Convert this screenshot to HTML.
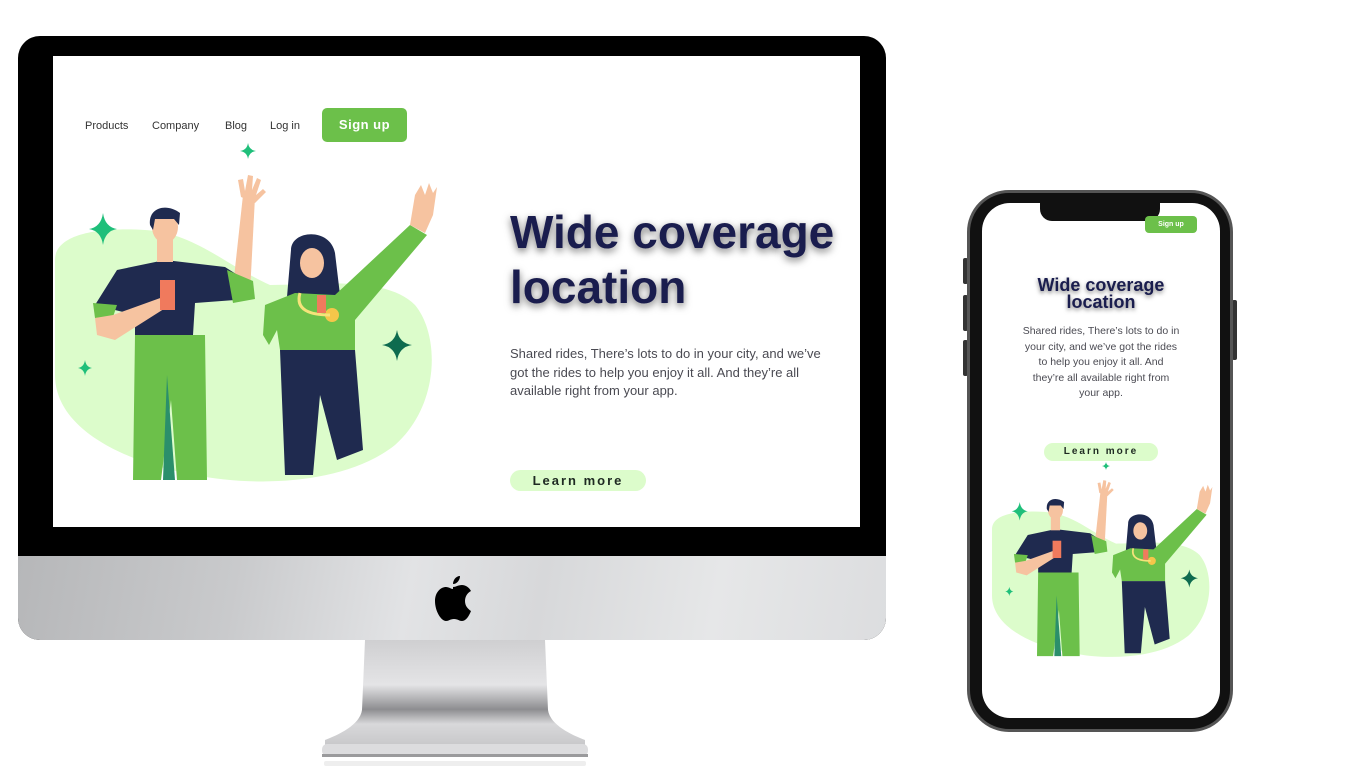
<!DOCTYPE html>
<html><head><meta charset="utf-8"><style>
*{margin:0;padding:0;box-sizing:border-box}
body{width:1366px;height:768px;background:#fff;position:relative;overflow:hidden;font-family:"Liberation Sans",sans-serif}
.abs{position:absolute}
.nav{position:absolute;top:120px;font-size:11px;color:#333}
.title{position:absolute;font-weight:bold;color:#1a1d4e;text-shadow:0 3px 8px rgba(0,0,0,.55)}
.para{position:absolute;color:#4a4a52}
.lm{position:absolute;background:#dcfccb;font-weight:bold;color:#1e2a22;text-align:center;letter-spacing:2px}
</style></head><body>

<!-- iMac -->
<div class="abs" style="left:18px;top:36px;width:868px;height:604px;background:#000;border-radius:22px;overflow:hidden">
  <div class="abs" style="left:0;top:520px;width:868px;height:84px;background:linear-gradient(100deg,#b6b7b9 0%,#c9cacc 25%,#e2e3e5 45%,#d7d8da 60%,#e6e7e8 80%,#dcdddf 100%)"></div>
</div>
<div class="abs" style="left:53px;top:56px;width:807px;height:471px;background:#fff"></div>
<!-- apple -->
<svg class="abs" style="left:433px;top:574px" width="40" height="48" viewBox="0 0 40 48">
<path d="M27 2c0 4-3 8-7 8 0-4 3-8 7-8z" fill="#000"/>
<path d="M20 13c3 0 5-2 9-2 3 0 7 2 9 6-4 2-6 6-6 10 0 5 3 8 6 10-2 5-5 10-9 10-3 0-4-2-8-2s-5 2-8 2C8 47 2 37 2 27c0-9 6-14 11-14 3 0 5 2 7 2z" fill="#000"/>
</svg>
<!-- stand -->
<svg class="abs" style="left:310px;top:640px" width="290" height="128" viewBox="0 0 290 128">
<defs><linearGradient id="sg" x1="0" y1="0" x2="0" y2="1">
<stop offset="0" stop-color="#cfcfd1"/><stop offset=".4" stop-color="#e4e4e6"/><stop offset=".62" stop-color="#8d8d90"/><stop offset=".75" stop-color="#d8d8da"/><stop offset="1" stop-color="#c3c3c5"/></linearGradient></defs>
<path d="M55 0H235L238 70C240 85 262 95 275 100V112H15V100C28 95 50 85 52 70Z" fill="url(#sg)"/>
<rect x="12" y="104" width="266" height="12" rx="5" fill="#dcdcde"/>
<rect x="12" y="114" width="266" height="3" fill="#9a9a9c"/>
<rect x="14" y="121" width="262" height="5" rx="2" fill="#eeeeee"/>
</svg>

<!-- illustration defs -->
<svg width="0" height="0" style="position:absolute">
<defs>
<g id="ill">
<path d="M0,85 C0,60 40,52 90,55 C140,58 170,90 215,110 C260,110 330,100 360,130 C385,160 385,230 340,270 C290,310 200,312 140,300 C60,285 0,250 0,200 Z" fill="#dcfccb"/>
<!-- man -->
<path d="M178,112 L188,20 L200,22 L195,118Z" fill="#f6c3a0"/>
<path d="M186,22 L183,5 L188,4 L190,16 L193,0 L198,1 L197,15 L202,3 L206,5 L201,20 L208,14 L211,17 L200,28Z" fill="#f6c3a0"/>
<path d="M40,130 L62,95 L110,85 L170,92 L195,108 L198,122 L180,125 L140,128 L138,160 L80,160 L80,140 Z" fill="#1f2a4f"/>
<path d="M172,95 L198,106 L200,124 L178,128Z" fill="#6cc04a"/>
<path d="M38,128 L62,130 L58,142 L40,143Z" fill="#6cc04a"/>
<path d="M40,143 L58,140 L108,122 L112,132 L60,165 L42,160Z" fill="#f6c3a0"/>
<rect x="105" y="105" width="15" height="30" fill="#f07a5d"/>
<rect x="102" y="62" width="16" height="25" fill="#f6c3a0"/>
<ellipse cx="110" cy="52" rx="13" ry="16" fill="#f6c3a0"/>
<path d="M95,50 C93,32 112,28 125,38 L124,50 L119,44 L100,44 L98,55Z" fill="#1f2a4f"/>
<path d="M80,160 L150,160 L152,305 L122,305 L116,225 L106,305 L78,305Z" fill="#6cc04a"/>
<path d="M112,200 L120,305 L108,305Z" fill="#2b8f6b"/>
<!-- woman -->
<path d="M236,75 C236,55 275,52 280,78 L285,120 L232,122Z" fill="#1f2a4f"/>
<ellipse cx="257" cy="88" rx="12" ry="15" fill="#f6c3a0"/>
<path d="M210,130 L240,118 L280,120 L355,50 L372,60 L300,145 L300,175 L225,175 L222,155 L214,170 L208,160Z" fill="#6cc04a"/>
<path d="M355,50 L360,20 L366,10 L370,20 L374,8 L378,18 L382,12 L378,40 L370,58Z" fill="#f6c3a0"/>
<circle cx="277" cy="140" r="7" fill="#f5c64a"/>
<path d="M245,118 C240,135 255,140 275,140" stroke="#f5e37a" stroke-width="3" fill="none"/>
<rect x="262" y="120" width="9" height="18" fill="#f07a5d"/>
<path d="M225,175 L300,175 L308,275 L282,285 L265,220 L258,300 L230,300Z" fill="#1f2a4f"/>
<!-- sparkles -->
<path d="M48,38 Q50,52 62,54 Q50,56 48,70 Q46,56 34,54 Q46,52 48,38Z" fill="#1fbf7a"/>
<path d="M30,185 Q31,192 37,193 Q31,194 30,201 Q29,194 23,193 Q29,192 30,185Z" fill="#1fbf7a"/>
<path d="M342,155 Q344,168 357,170 Q344,172 342,186 Q340,172 327,170 Q340,168 342,155Z" fill="#0e6b4f"/>
</g>
</defs></svg>

<svg class="abs" style="left:55px;top:175px" width="390" height="315"><use href="#ill"/></svg>
<svg class="abs" style="left:240px;top:143px" width="16" height="16" viewBox="0 0 16 16"><path d="M8,0 Q9,7 16,8 Q9,9 8,16 Q7,9 0,8 Q7,7 8,0Z" fill="#1fbf7a"/></svg>

<div class="nav" style="left:85px">Products</div>
<div class="nav" style="left:152px">Company</div>
<div class="nav" style="left:225px">Blog</div>
<div class="nav" style="left:270px">Log in</div>
<div class="abs" style="left:322px;top:108px;width:85px;height:34px;background:#6cc04a;border-radius:5px;color:#fff;font-weight:bold;font-size:13px;line-height:34px;text-align:center;letter-spacing:.5px">Sign up</div>

<div class="title" style="left:510px;top:205px;font-size:46px;line-height:55px">Wide coverage<br>location</div>
<div class="para" style="left:510px;top:345px;font-size:13px;line-height:18.5px">Shared rides, There’s lots to do in your city, and we’ve<br>got the rides to help you enjoy it all. And they’re all<br>available right from your app.</div>
<div class="lm" style="left:510px;top:470px;width:136px;height:21px;border-radius:11px;font-size:13px;line-height:21px">Learn more</div>

<!-- phone -->
<div class="abs" style="left:963px;top:258px;width:5px;height:26px;background:#333;border-radius:2px"></div>
<div class="abs" style="left:963px;top:295px;width:5px;height:36px;background:#333;border-radius:2px"></div>
<div class="abs" style="left:963px;top:340px;width:5px;height:36px;background:#333;border-radius:2px"></div>
<div class="abs" style="left:1232px;top:300px;width:5px;height:60px;background:#333;border-radius:2px"></div>
<div class="abs" style="left:967px;top:190px;width:266px;height:542px;background:#111;border-radius:42px;border:3px solid #555"></div>
<div class="abs" style="left:982px;top:203px;width:238px;height:515px;background:#fff;border-radius:28px;overflow:hidden">
  <div class="abs" style="left:58px;top:0;width:120px;height:18px;background:#111;border-radius:0 0 12px 12px"></div>
  <div class="abs" style="left:163px;top:13px;width:52px;height:17px;background:#6cc04a;border-radius:4px;color:#fff;font-size:7px;font-weight:bold;line-height:17px;text-align:center">Sign up</div>
  <div class="title" style="left:0;width:238px;text-align:center;top:74px;font-size:18px;line-height:17px;text-shadow:0 2px 4px rgba(0,0,0,.5)">Wide coverage<br>location</div>
  <div class="para" style="left:0;width:238px;text-align:center;top:121px;font-size:10.5px;line-height:15.5px">Shared rides, There’s lots to do in<br>your city, and we’ve got the rides<br>to help you enjoy it all. And<br>they’re all available right from<br>your app.</div>
  <div class="lm" style="left:62px;top:240px;width:114px;height:18px;border-radius:9px;font-size:10px;line-height:18px">Learn more</div>
  <svg class="abs" style="left:120px;top:259px" width="8" height="8" viewBox="0 0 16 16"><path d="M8,0 Q9,7 16,8 Q9,9 8,16 Q7,9 0,8 Q7,7 8,0Z" fill="#1fbf7a"/></svg>
  <svg class="abs" style="left:10px;top:277px" width="225" height="182" viewBox="0 0 390 315"><use href="#ill"/></svg>
</div>
</body></html>
